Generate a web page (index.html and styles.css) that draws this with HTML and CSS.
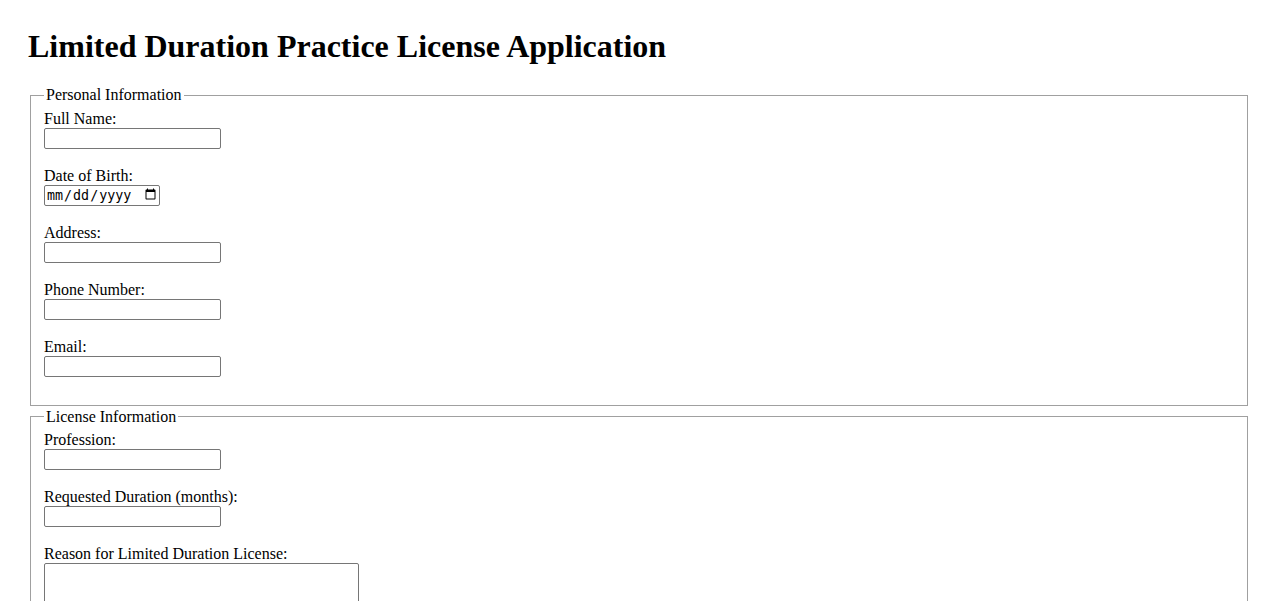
FILE: index.html
```html
<!DOCTYPE html>
<html lang="en">
<head>
    <meta charset="UTF-8">
    <meta name="viewport" content="width=device-width, initial-scale=1.0">
    <title>Limited Duration Practice License Application</title>
    <link rel="stylesheet" href="styles.css">
</head>
<body>
    <h1 class="page-title">Limited Duration Practice License Application</h1>

    <form class="license-form">
        <fieldset class="form-section">
            <legend>Personal Information</legend>
            <label for="fullName">Full Name:</label><br>
            <input type="text" id="fullName" name="fullName" class="text-field"><br><br>

            <label for="dob">Date of Birth:</label><br>
            <input type="date" id="dob" name="dob" class="date-field"><br><br>

            <label for="address">Address:</label><br>
            <input type="text" id="address" name="address" class="text-field"><br><br>

            <label for="phone">Phone Number:</label><br>
            <input type="tel" id="phone" name="phone" class="text-field"><br><br>

            <label for="email">Email:</label><br>
            <input type="email" id="email" name="email" class="text-field"><br><br>
        </fieldset>

        <fieldset class="form-section">
            <legend>License Information</legend>
            <label for="profession">Profession:</label><br>
            <input type="text" id="profession" name="profession" class="text-field"><br><br>

            <label for="duration">Requested Duration (months):</label><br>
            <input type="number" id="duration" name="duration" class="text-field"><br><br>

            <label for="reason">Reason for Limited Duration License:</label><br>
            <textarea id="reason" name="reason" class="reason-field" rows="4" cols="40"></textarea><br><br>
        </fieldset>
    </form>
</body>
</html>
```

FILE: styles.css
```css
body {
    font-family: "Liberation Serif", "Times New Roman", serif;
    font-size: 16px;
    margin: 0;
    padding: 28px 28px;
    color: #000;
    background: #fff;
}

.page-title {
    font-size: 2em;
    font-weight: bold;
    margin: 0 0 21px;
}

.form-section {
    margin: 0 2px 2px;
    padding: 0.35em 13px 0.625em;
    border: 1px solid #a0a0a0;
    box-shadow: inset 1px 1px 0 #fff;
}

.form-section legend {
    padding: 0 2px;
}

.text-field,
.date-field,
.reason-field {
    box-sizing: border-box;
    border: 1px solid #767676;
    border-radius: 2px;
    margin: 0;
}

.text-field {
    width: 177px;
    height: 21px;
}

.date-field {
    width: 116px;
    height: 21px;
}

.reason-field {
    width: 315px;
    height: 70px;
}
```
